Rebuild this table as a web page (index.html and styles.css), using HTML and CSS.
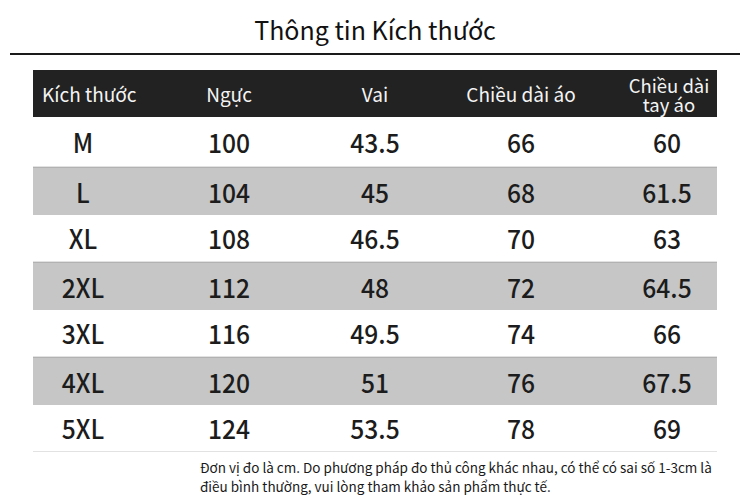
FILE: index.html
```html
<!DOCTYPE html>
<html lang="vi">
<head>
<meta charset="utf-8">
<title>Thông tin Kích thước</title>
<link rel="stylesheet" href="styles.css">
</head>
<body>
<div class="page">
  <h1 class="title">Thông tin Kích thước</h1>
  <div class="rule"></div>
  <div class="table">
    <div class="row head">
      <div class="cell first">Kích thước</div>
      <div class="cell">Ngực</div>
      <div class="cell">Vai</div>
      <div class="cell">Chiều dài áo</div>
      <div class="cell two"><span class="ln">Chiều dài</span><span class="ln">tay áo</span></div>
    </div>
    <div class="row body tall"><div class="cell">M</div><div class="cell">100</div><div class="cell">43.5</div><div class="cell">66</div><div class="cell">60</div></div>
    <div class="row body grey"><div class="cell">L</div><div class="cell">104</div><div class="cell">45</div><div class="cell">68</div><div class="cell">61.5</div></div>
    <div class="row body"><div class="cell">XL</div><div class="cell">108</div><div class="cell">46.5</div><div class="cell">70</div><div class="cell">63</div></div>
    <div class="row body grey"><div class="cell">2XL</div><div class="cell">112</div><div class="cell">48</div><div class="cell">72</div><div class="cell">64.5</div></div>
    <div class="row body"><div class="cell">3XL</div><div class="cell">116</div><div class="cell">49.5</div><div class="cell">74</div><div class="cell">66</div></div>
    <div class="row body grey"><div class="cell">4XL</div><div class="cell">120</div><div class="cell">51</div><div class="cell">76</div><div class="cell">67.5</div></div>
    <div class="row body last"><div class="cell">5XL</div><div class="cell">124</div><div class="cell">53.5</div><div class="cell">78</div><div class="cell">69</div></div>
  </div>
  <p class="note">Đơn vị đo là cm. Do phương pháp đo thủ công khác nhau, có thể có sai số 1-3cm là<br>điều bình thường, vui lòng tham khảo sản phẩm thực tế.</p>
</div>
</body>
</html>
```
FILE: styles.css
```css
html, body {
  margin: 0;
  padding: 0;
  background: #ffffff;
}
body {
  font-family: "Noto Sans CJK SC", "Noto Sans", sans-serif;
  color: #1a1a1a;
}
.page {
  width: 750px;
  height: 503px;
  overflow: hidden;
  display: flex;
  flex-direction: column;
}
.title {
  margin: 0;
  padding-top: 11px;
  height: 42px;
  font-size: 25px;
  font-weight: 400;
  line-height: 36px;
  text-align: center;
  color: #111;
}
.rule {
  margin: 0 10px 0 10px;
  height: 2px;
  background: #1a1a1a;
}
.table {
  margin: 15px 33px 0 33px;
  display: flex;
  flex-direction: column;
}
.row {
  display: grid;
  grid-template-columns: repeat(5, 146px);
  justify-content: center;
  align-items: center;
  overflow: visible;
}
.cell {
  text-align: center;
  white-space: nowrap;
}
.head {
  height: 47px;
  background: #222222;
  color: #f4f4f4;
  font-size: 19px;
  line-height: 21px;
}
.head .first {
  text-align: left;
  padding-left: 32px;
}
.head .two {
  display: flex;
  flex-direction: column;
  align-items: center;
  padding-left: 4px;
  font-size: 18.5px;
}
.head .two .ln {
  display: block;
  height: 21px;
  line-height: 24px;
}
.head .two .ln + .ln {
  line-height: 20px;
}
.body {
  height: 47.5px;
  font-size: 26.5px;
  font-weight: 500;
  color: #1c1c1c;
  border-bottom: 1px solid #e2e2e2;
  box-sizing: border-box;
}
.body .cell {
  transform: scaleX(0.93);
}
.body.tall {
  height: 50px;
}
.grey {
  background: #c6c6c6;
  border-top: 1px solid #b2b2b2;
  border-bottom: none;
}
.note {
  margin: 6px 0 0 200px;
  font-size: 13.5px;
  line-height: 19px;
  color: #1a1a1a;
}
```
